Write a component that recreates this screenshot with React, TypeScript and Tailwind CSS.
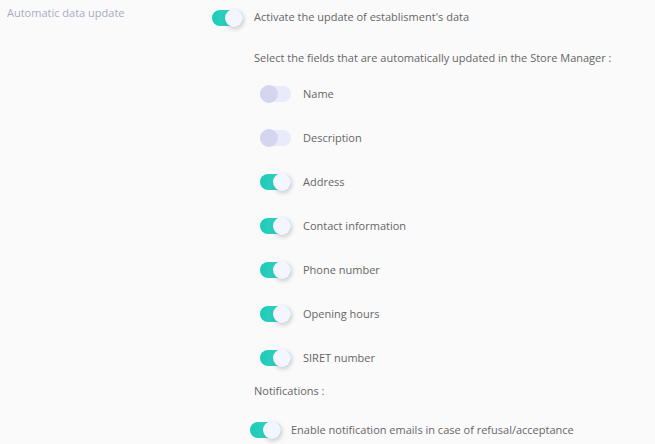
import React from 'react';

interface ToggleProps {
  on: boolean;
}

// Pill switch: 31x16 track with an 18px knob
const Toggle = ({ on }: ToggleProps) => (
  <span
    className={
      on
        ? 'relative inline-flex h-[16px] w-[31px] shrink-0 rounded-full bg-gradient-to-r from-[#1ec9b9] to-[#3ad9c9]'
        : 'relative inline-flex h-[16px] w-[31px] shrink-0 rounded-full bg-[#e9ebfb]'
    }
  >
    <span
      className={
        on
          ? 'absolute -top-[1px] right-0 h-[18px] w-[18px] rounded-full bg-[#f3f5ff] shadow-[1px_2px_4px_rgba(60,60,90,0.25)]'
          : 'absolute -top-[1px] left-0 h-[18px] w-[18px] rounded-full bg-[#d3d6ee]'
      }
    />
  </span>
);

const fields = [
  { label: 'Name', on: false },
  { label: 'Description', on: false },
  { label: 'Address', on: true },
  { label: 'Contact information', on: true },
  { label: 'Phone number', on: true },
  { label: 'Opening hours', on: true },
  { label: 'SIRET number', on: true },
];

export default function App() {
  return (
    <div className="h-[444px] w-[655px] overflow-hidden bg-[#fafafa] text-[11px] text-[#666666] font-['Open_Sans',sans-serif]">
      <div className="flex">
        {/* Left label column */}
        <div className="w-[212px] shrink-0 pl-[7px] pt-[5px] text-[#a9aac4]">Automatic data update</div>

        <div className="flex flex-col">
          <div className="flex h-[35px] items-center gap-[11px]">
            <Toggle on />
            <span>Activate the update of establisment's data</span>
          </div>

          <div className="ml-[42px] flex flex-col">
            <div className="mt-[14px] h-[18px] leading-[18px]">
              Select the fields that are automatically updated in the Store Manager :
            </div>

            <div className="mt-[5px] flex flex-col">
              {fields.map((f) => (
                <div key={f.label} className="flex h-[44px] items-center gap-[12px] pl-[6px]">
                  <Toggle on={f.on} />
                  <span>{f.label}</span>
                </div>
              ))}
            </div>

            <div className="mt-[2px] h-[18px] leading-[18px]">Notifications :</div>

            <div className="-ml-[4px] mt-[15px] flex h-[30px] items-center gap-[10px]">
              <Toggle on />
              <span>Enable notification emails in case of refusal/acceptance</span>
            </div>
          </div>
        </div>
      </div>
    </div>
  );
}
